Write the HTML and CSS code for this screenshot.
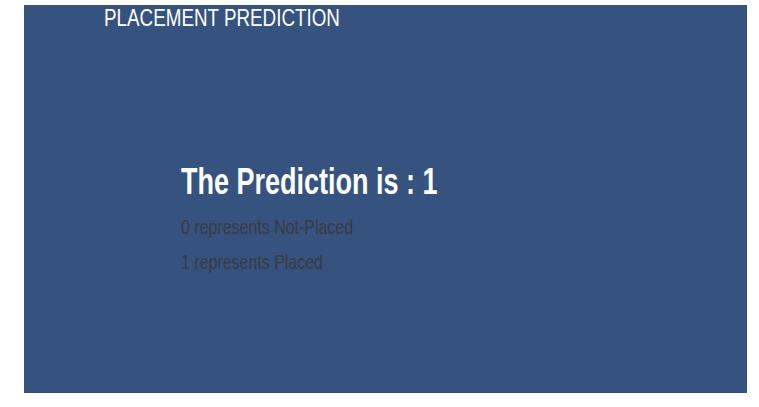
FILE: index.html
```html
<!DOCTYPE html>
<html>
<head>
<meta charset="utf-8">
<link rel="stylesheet" href="styles.css">
</head>
<body>
<div class="panel">
  <div class="brand">PLACEMENT PREDICTION</div>
  <div class="result">
    <h1 class="headline">The Prediction is : 1</h1>
    <div class="notes">
      <p class="note">0 represents Not-Placed</p>
      <p class="note">1 represents Placed</p>
    </div>
  </div>
</div>
</body>
</html>
```
FILE: styles.css
```css
html, body {
  margin: 0;
  padding: 0;
  background: #ffffff;
}
body {
  padding: 5px 12px 14px 24px;
  font-family: "Liberation Sans", Arial, sans-serif;
}
.panel {
  width: 723px;
  height: 388px;
  background: #36527e;
  box-sizing: border-box;
  padding: 1px 0 0 80px;
}
.brand {
  color: #ffffff;
  font-size: 24px;
  line-height: 24px;
  transform: scaleX(0.784);
  transform-origin: left center;
}
.result {
  padding: 132px 0 0 77px;
}
.headline {
  margin: 0;
  color: #ffffff;
  font-size: 36px;
  font-weight: bold;
  line-height: 40px;
  transform: scaleX(0.75);
  transform-origin: left center;
}
.notes {
  padding-top: 7px;
}
.note {
  margin: 0;
  color: #383b41;
  font-size: 21px;
  line-height: 35px;
  transform: scaleX(0.76);
  transform-origin: left center;
}
```
